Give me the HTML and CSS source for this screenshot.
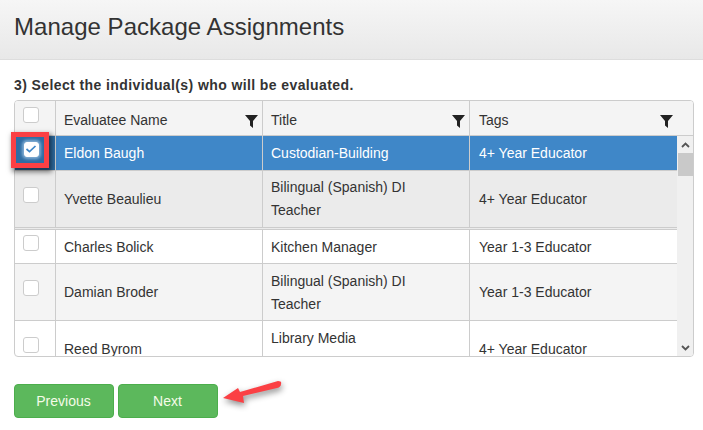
FILE: index.html
```html
<!DOCTYPE html>
<html lang="en">
<head>
<meta charset="utf-8">
<title>Manage Package Assignments</title>
<link rel="stylesheet" href="styles.css">
</head>
<body>
<header class="page-header"><h1>Manage Package Assignments</h1></header>
<main class="content">
  <p class="step">3) Select the individual(s) who will be evaluated.</p>
  <div class="grid-box">
    <div class="grid-main">
      <div class="row head">
        <div class="cell check"><span class="box"></span></div>
        <div class="cell">Evaluatee Name<svg class="funnel" viewBox="0 0 13 13"><path d="M0 0h13L8 6v7L5 10.5V6z"/></svg></div>
        <div class="cell">Title<svg class="funnel" viewBox="0 0 13 13"><path d="M0 0h13L8 6v7L5 10.5V6z"/></svg></div>
        <div class="cell">Tags<svg class="funnel" viewBox="0 0 13 13"><path d="M0 0h13L8 6v7L5 10.5V6z"/></svg></div>
      </div>
      <div class="body">
        <div class="row selected h35">
          <div class="cell check"><span class="box on"><svg viewBox="0 0 14 14"><path d="M2.5 7l3 2.6 6-5.6" fill="none" stroke="#3f87c8" stroke-width="1.7"/></svg></span></div>
          <div class="cell">Eldon Baugh</div>
          <div class="cell">Custodian-Building</div>
          <div class="cell">4+ Year Educator</div>
        </div>
        <div class="row alt h57 double">
          <div class="cell check"><span class="box"></span></div>
          <div class="cell">Yvette Beaulieu</div>
          <div class="cell">Bilingual (Spanish) DI Teacher</div>
          <div class="cell">4+ Year Educator</div>
        </div>
        <div class="row h34">
          <div class="cell check"><span class="box"></span></div>
          <div class="cell">Charles Bolick</div>
          <div class="cell">Kitchen Manager</div>
          <div class="cell">Year 1-3 Educator</div>
        </div>
        <div class="row soft h57">
          <div class="cell check"><span class="box"></span></div>
          <div class="cell">Damian Broder</div>
          <div class="cell lines">Bilingual (Spanish) DI Teacher</div>
          <div class="cell">Year 1-3 Educator</div>
        </div>
        <div class="row h57">
          <div class="cell check"><span class="box"></span></div>
          <div class="cell">Reed Byrom</div>
          <div class="cell first-line">Library Media</div>
          <div class="cell">4+ Year Educator</div>
        </div>
      </div>
    </div>
    <div class="scroll-col">
      <div class="scroll-corner"></div>
      <div class="scrollbar">
        <svg class="arrow" viewBox="0 0 9 6"><path d="M1 5l3.5-3.5L8 5" fill="none" stroke="#555" stroke-width="1.8"/></svg>
        <div class="thumb"></div>
        <div class="track"></div>
        <svg class="arrow" viewBox="0 0 9 6"><path d="M1 1l3.5 3.5L8 1" fill="none" stroke="#555" stroke-width="1.8"/></svg>
      </div>
    </div>
  </div>
  <div class="actions">
    <button class="btn" type="button">Previous</button>
    <button class="btn" type="button">Next</button>
  </div>
</main>
<div class="callout"></div>
<svg class="pointer" viewBox="0 0 703 430" width="703" height="430">
  <path d="M223 398L238 388L240 392L278 381Q282 381 281 384Q281 387 277 388L243 396L244 403Z" fill="#fb4044"/>
</svg>
</body>
</html>
```
FILE: styles.css
```css
* { box-sizing: border-box; }
html, body { margin: 0; height: 430px; overflow: hidden; }
body { background: #fff; color: #333; font: 14px/20px "Liberation Sans", Arial, sans-serif; position: relative; }
.page-header { height: 60px; padding: 0 14px; display: flex; align-items: center; background: linear-gradient(#f6f6f6, #e8e8e8); border-bottom: 1px solid #ddd; }
h1 { margin: 0 0 6px; font-size: 24px; font-weight: 400; line-height: 30px; letter-spacing: 0.03px; }
.content { padding: 15px 9px 0 14px; }
.step { margin: 0 0 5px; font-weight: 700; letter-spacing: 0.4px; line-height: 20px; }
.grid-box { height: 257px; display: flex; border: 1px solid #ccc; border-radius: 4px; overflow: hidden; }
.grid-main { width: 662px; display: flex; flex-direction: column; }
.body { flex: 1; overflow: hidden; }
.row { display: grid; grid-template-columns: 41px 207px 207px 207px; border-bottom: 1px solid #ccc; }
.head { height: 35px; background: #f4f4f4; flex: none; }
.h35 { height: 35px; }
.h34 { height: 34px; }
.h57 { height: 57px; }
.double { height: 59px; border-bottom: 3px double #ccc; }
.alt { background: #ebebeb; }
.soft { background: #f4f4f4; }
.selected { background: #3f87c8; color: #fff; }
.cell { display: flex; align-items: center; padding: 0 57px 0 8px; border-right: 1px solid #ccc; line-height: 23px; position: relative; min-width: 0; }
.cell:last-child { border-right: 0; padding-left: 9px; }
.head .cell { padding-top: 5px; }
.h34 .cell { padding-top: 2px; }
.lines { padding-top: 2px; }
.first-line { align-items: flex-start; padding-top: 6px; }
.head .cell.check, .cell.check { padding: 7px 0 0 8px; align-items: flex-start; }
.h57 .cell.check { padding-top: 16px; }
.head .cell.check { padding-top: 6px; }
.h34 .cell.check { padding-top: 5px; }
.selected .cell.check { padding-top: 6px; padding-left: 9px; background: #2e6da4; }
.box { display: block; width: 16px; height: 16px; border: 1px solid #ccc; border-radius: 3px; background: #fff; }
.box.on { width: 15px; height: 15px; border-color: #fff; box-shadow: 0 0 3px 2px rgba(190,220,245,.6); }
.box.on svg { display: block; width: 14px; height: 14px; margin: -1px 0 0 -1px; }
.funnel { position: absolute; right: 4px; top: 14px; width: 13px; height: 13px; fill: #222; }
.scroll-col { flex: 1; display: flex; flex-direction: column; min-width: 0; }
.scroll-corner { height: 35px; background: #f4f4f4; border-bottom: 1px solid #ccc; flex: none; }
.scrollbar { flex: 1; background: #f0f0f0; display: flex; flex-direction: column; align-items: center; padding: 6px 0 5px; }
.arrow { width: 9px; height: 6px; flex: none; }
.thumb { width: 15px; height: 23px; background: #c9c9c9; margin-top: 5px; flex: none; }
.track { flex: 1; }
.actions { display: flex; gap: 4px; margin-top: 27px; }
.btn { width: 100px; height: 34px; padding: 0 1px 0 0; background: #5cb85c; border: 1px solid #4cae4c; border-radius: 4px; color: #f5fbe8; font: inherit; }
.callout { position: absolute; left: 11px; top: 132px; width: 38px; height: 36px; border: 5px solid #fb4044; box-shadow: 2px 3px 5px 1px rgba(0,0,0,.5); }
.pointer { position: absolute; left: 0; top: 0; filter: drop-shadow(1px 3px 3px rgba(0,0,0,.45)); pointer-events: none; }
```
